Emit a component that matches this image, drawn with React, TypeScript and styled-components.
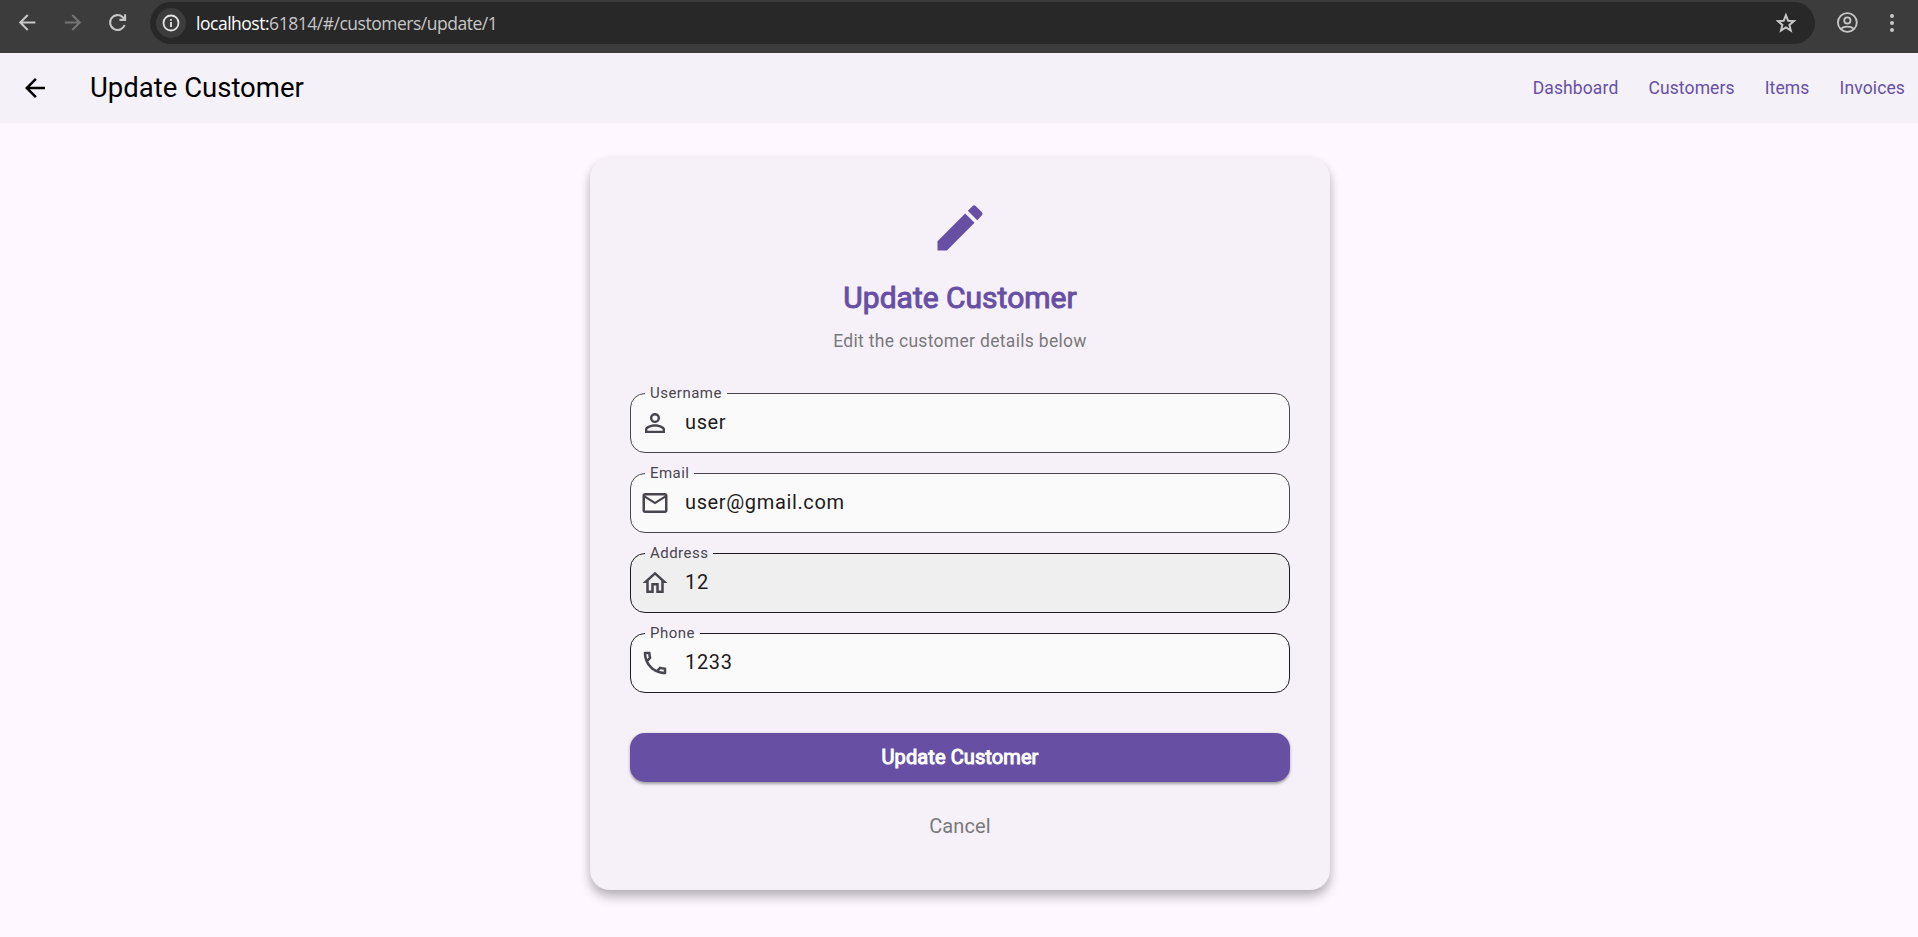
import React from "react";
import styled, { createGlobalStyle, css } from "styled-components";
import {
  MdEdit,
  MdPersonOutline,
  MdOutlineEmail,
  MdOutlineHome,
  MdOutlinePhone,
  MdArrowBack,
} from "react-icons/md";

const GlobalStyle = createGlobalStyle`
  *, *::before, *::after { box-sizing: border-box; }
  html, body { margin: 0; padding: 0; height: 100%; overflow: hidden; }
  #root { height: 100%; }
  body { font-family: Roboto, "Liberation Sans", sans-serif; background: #fef7ff; }
`;

const Page = styled.div`
  height: 937px;
  display: flex;
  flex-direction: column;
  background: #fef7ff;
`;

const BrowserBar = styled.div`
  height: 53px;
  flex: none;
  display: flex;
  align-items: flex-start;
  background: #3c3c3c;
  padding: 2px 13px 0 14px;
`;

const BrowserButton = styled.span<{ $color?: string; $width?: number }>`
  width: ${(p) => p.$width ?? 45}px;
  height: 41px;
  flex: none;
  display: flex;
  align-items: center;
  padding-left: 2px;
  color: ${(p) => p.$color ?? "#c7c7c7"};
`;

const AddressBar = styled.div`
  flex: 1;
  height: 42px;
  border-radius: 21px;
  background: #282828;
  display: flex;
  align-items: center;
  padding: 0 17px 0 6px;
  margin-right: 20px;
`;

const SiteInfo = styled.span`
  width: 30px;
  height: 30px;
  border-radius: 50%;
  background: #3c3c3c;
  color: #e3e3e3;
  display: flex;
  align-items: center;
  justify-content: center;
  margin-right: 10px;
`;

const Url = styled.span`
  flex: 1;
  font-family: "Open Sans", "Noto Sans", sans-serif;
  font-size: 17.5px;
  letter-spacing: -0.48px;
  line-height: 24px;
  color: #c7c7c7;
  b { font-weight: 400; color: #fff; }
`;

const AppBar = styled.header`
  height: 70px;
  flex: none;
  display: flex;
  align-items: center;
  background: #f4f1f9;
  padding: 0 13px 0 20px;
`;

const BackButton = styled.button`
  width: 30px;
  height: 30px;
  padding: 0;
  border: 0;
  background: none;
  color: #000;
  display: flex;
  margin-right: 40px;
`;

const PageTitle = styled.h1`
  flex: 1;
  margin: 0;
  padding-bottom: 2px;
  font-size: 27.5px;
  font-weight: 400;
  line-height: 35px;
  color: #000;
`;

const Nav = styled.nav`
  display: flex;
  gap: 30px;
`;

const NavLink = styled.a`
  font-size: 17.5px;
  line-height: 25px;
  letter-spacing: 0.125px;
  color: #6750a4;
`;

const Main = styled.main`
  flex: 1;
  display: flex;
  justify-content: center;
  align-items: flex-start;
  padding-top: 34.5px;
  padding-left: 2px;
`;

const Card = styled.form`
  width: 740px;
  height: 732.5px;
  border-radius: 20px;
  background: #f6f1f9;
  padding: 40px;
  display: flex;
  flex-direction: column;
  align-items: center;
  box-shadow: 0 7px 11px rgba(0, 0, 0, 0.25), 0 2px 8px rgba(0, 0, 0, 0.07);
`;

const fauxBold = css`
  font-weight: 400;
  -webkit-text-stroke: 1px currentColor;
`;

const CardIcon = styled.div`
  height: 60px;
  color: #6750a4;
`;

const CardTitle = styled.h2`
  ${fauxBold}
  margin: 20px 0 0;
  font-size: 30px;
  line-height: 40px;
  color: #6750a4;
`;

const CardSubtitle = styled.p`
  margin: 11px 0 0;
  font-size: 17.5px;
  line-height: 25px;
  letter-spacing: 0.3125px;
  color: #797979;
`;

const Fields = styled.div`
  width: 100%;
  margin-top: 31px;
  display: flex;
  flex-direction: column;
  gap: 12px;
`;

const Field = styled.fieldset<{ $dark?: boolean; $hover?: boolean }>`
  height: 68px;
  min-width: 0;
  margin: 0;
  padding: 0 9px;
  border: 1.25px solid ${(p) => (p.$dark ? "#1d1b20" : "#49454f")};
  border-radius: 15px;
  background: ${(p) => (p.$hover ? "#efefef" : "#fafafa")};
`;

const Label = styled.legend`
  margin-left: 5px;
  padding: 0 5px;
  height: 18px;
  font-size: 15px;
  line-height: 16px;
  letter-spacing: 0.47px;
  color: #49454f;
`;

const Control = styled.div`
  height: 40px;
  display: flex;
  align-items: center;
  gap: 15px;
  color: #49454f;
`;

const Value = styled.span`
  padding-bottom: 2px;
  font-size: 20px;
  line-height: 30px;
  letter-spacing: 0.635px;
  color: #1d1b20;
`;

const SubmitButton = styled.button`
  ${fauxBold}
  width: 100%;
  height: 49px;
  flex: none;
  margin-top: 40.5px;
  padding: 0 0 1px;
  border: 0;
  border-radius: 15px;
  background: #6750a4;
  color: #fff;
  font-family: inherit;
  font-size: 20px;
  letter-spacing: 0.1px;
  box-shadow: 0 1.5px 3px rgba(0, 0, 0, 0.35);
`;

const CancelButton = styled.button`
  margin-top: 29px;
  border: 0;
  padding: 0;
  background: none;
  font-family: inherit;
  font-size: 20px;
  line-height: 30px;
  letter-spacing: 0.125px;
  color: #797979;
`;

const fields = [
  { label: "Username", value: "user", icon: MdPersonOutline },
  { label: "Email", value: "user@gmail.com", icon: MdOutlineEmail },
  { label: "Address", value: "12", icon: MdOutlineHome, dark: true, hover: true },
  { label: "Phone", value: "1233", icon: MdOutlinePhone, dark: true },
];

const Stroke = ({ size, children, width = 1.8 }: { size: number; children: React.ReactNode; width?: number }) => (
  <svg width={size} height={size} viewBox="0 0 20 20" fill="none" stroke="currentColor" strokeWidth={width}>
    {children}
  </svg>
);

export default function App() {
  return (
    <Page>
      <GlobalStyle />
      <BrowserBar>
        <BrowserButton>
          <Stroke size={23}><path d="M16.8 10H4M10.2 3.5 3.7 10l6.5 6.5" /></Stroke>
        </BrowserButton>
        <BrowserButton $color="#757575">
          <Stroke size={23}><path d="M3.2 10H16M9.8 3.5l6.5 6.5-6.5 6.5" /></Stroke>
        </BrowserButton>
        <BrowserButton $width={46}>
          <Stroke size={23}><path d="M16.2 12.2A6.5 6.5 0 1 1 14.6 5.4l1.6 1.7M16.6 2.9v4.8h-4.9" /></Stroke>
        </BrowserButton>
        <AddressBar>
          <SiteInfo>
            <Stroke size={20} width={1.8}>
              <circle cx="10" cy="10" r="7.5" />
              <path d="M10 9v5M10 6v1.8" />
            </Stroke>
          </SiteInfo>
          <Url><b>localhost:</b>61814/#/customers/update/1</Url>
          <Stroke size={22} width={1.8}>
            <path stroke="#c7c7c7" d="m9 2.9 2 5 5.3.4-4.1 3.4 1.3 5.2L9 14.1l-4.5 2.8 1.3-5.2-4.1-3.4L7 7.9z" />
          </Stroke>
        </AddressBar>
        <BrowserButton>
          <Stroke size={23} width={1.6}>
            <circle cx="9" cy="10" r="8.2" />
            <circle cx="9" cy="8.2" r="2.7" />
            <path d="M3.2 15.6c3-2.6 8.6-2.6 11.6 0" />
          </Stroke>
        </BrowserButton>
        <BrowserButton $width={25}>
          <svg width="20" height="24" viewBox="0 0 20 24" fill="currentColor">
            <circle cx="10" cy="5" r="2" /><circle cx="10" cy="12" r="2" /><circle cx="10" cy="19" r="2" />
          </svg>
        </BrowserButton>
      </BrowserBar>
      <AppBar>
        <BackButton type="button" aria-label="Back"><MdArrowBack size={30} /></BackButton>
        <PageTitle>Update Customer</PageTitle>
        <Nav>
          <NavLink>Dashboard</NavLink>
          <NavLink>Customers</NavLink>
          <NavLink>Items</NavLink>
          <NavLink>Invoices</NavLink>
        </Nav>
      </AppBar>
      <Main>
        <Card>
          <CardIcon><MdEdit size={60} /></CardIcon>
          <CardTitle>Update Customer</CardTitle>
          <CardSubtitle>Edit the customer details below</CardSubtitle>
          <Fields>
            {fields.map(({ label, value, icon: Icon, dark, hover }) => (
              <Field key={label} $dark={dark} $hover={hover}>
                <Label>{label}</Label>
                <Control>
                  <Icon size={30} />
                  <Value>{value}</Value>
                </Control>
              </Field>
            ))}
          </Fields>
          <SubmitButton type="button">Update Customer</SubmitButton>
          <CancelButton type="button">Cancel</CancelButton>
        </Card>
      </Main>
    </Page>
  );
}
